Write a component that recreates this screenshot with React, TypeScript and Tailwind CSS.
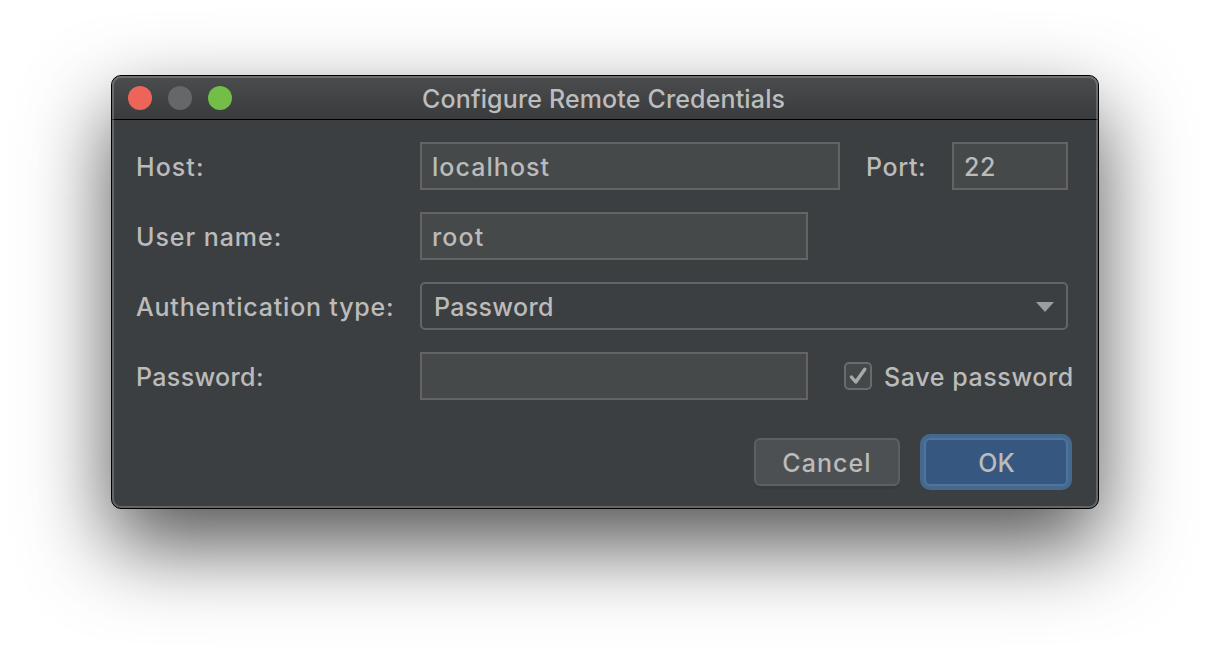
import type { ReactNode } from "react";

function Field({ className, children }: { className: string; children?: ReactNode }) {
  return (
    <div className={`flex h-12 items-center border-2 border-[#646464] bg-[#45494a] pl-2.5 pt-0.5 ${className}`}>
      {children}
    </div>
  );
}

function TitleBar() {
  return (
    <header className="flex h-11 items-center border-b border-black bg-linear-to-b from-[#4b4c4d] to-[#3a3b3c] pl-4">
      <div className="flex w-[104px] gap-4">
        <span className="size-6 rounded-full bg-[#ed6559]" />
        <span className="size-6 rounded-full bg-[#666769]" />
        <span className="size-6 rounded-full bg-[#72be47]" />
      </div>
      <h1 className="ml-[190px] whitespace-nowrap pt-0.5 text-[25px] font-[450] tracking-[0.15px] text-[#bcbdbe]">
        Configure Remote Credentials
      </h1>
    </header>
  );
}

export default function App() {
  return (
    <main className="flex h-[656px] w-[1210px] overflow-hidden bg-white pl-[111px] pt-[75px] font-['Inter',sans-serif]">
      <section className="relative h-[434px] w-[988px] overflow-visible rounded-[10px] border border-black bg-[#3c3f41] text-[25px] font-[450] leading-[30px] text-[#bbbbbb] shadow-[0_36px_84px_rgba(0,0,0,0.68)]">
        <div className="h-full overflow-hidden rounded-[9px]">
          <TitleBar />
          <div className="flex flex-col gap-[22px] pl-6 pt-[22px]">
            <div className="flex h-12 items-center">
              <span className="w-[284px] pt-0.5 tracking-[1.05px]">Host:</span>
              <Field className="w-[420px]"><span className="tracking-[1.05px]">localhost</span></Field>
              <span className="w-[112px] pl-[26px] pt-0.5 tracking-[0.6px]">Port:</span>
              <Field className="w-[116px]"><span className="tracking-[0.5px]">22</span></Field>
            </div>
            <div className="flex h-12 items-center">
              <span className="w-[284px] pt-0.5 tracking-[0.95px]">User name:</span>
              <Field className="w-[388px]"><span className="tracking-[1.1px]">root</span></Field>
            </div>
            <div className="flex h-12 items-center">
              <span className="w-[284px] whitespace-nowrap pt-0.5 tracking-[0.8px]">Authentication type:</span>
              <div className="flex h-12 w-[648px] items-center justify-between rounded-[5px] border-2 border-[#646464] pl-3 pr-3">
                <span className="pt-0.5 tracking-[0.32px]">Password</span>
                <svg className="mt-0.5" width="18" height="10" viewBox="0 0 18 10">
                  <path d="M0 0H18L9 10Z" fill="#9a9da1" />
                </svg>
              </div>
            </div>
            <div className="flex h-12 items-center">
              <span className="w-[284px] pt-0.5 tracking-[0.35px]">Password:</span>
              <Field className="w-[388px]" />
              <span className="ml-9 flex size-7 items-center justify-center rounded-[5px] border-2 border-[#6b6b6b] bg-[#43494a]">
                <svg className="shrink-0" width="24" height="24" viewBox="0 0 24 24" fill="none" stroke="#a9a9a9" strokeWidth="3.4" strokeLinecap="round" strokeLinejoin="round">
                  <path d="M5.4 13L9.8 18L18.8 5.2" />
                </svg>
              </span>
              <span className="ml-3 whitespace-nowrap pt-0.5 tracking-[0.6px]">Save password</span>
            </div>
          </div>
          <div className="flex justify-end gap-6 pr-[30px] pt-[38px]">
            <div className="flex h-12 w-[146px] items-center justify-center rounded-md border-2 border-[#5e6060] bg-[#4c5052] shadow-[0_3px_0_#383b3d]">
              <span className="pt-0.5 tracking-[1.05px]">Cancel</span>
            </div>
            <div className="flex h-12 w-[144px] items-center justify-center rounded-md border-2 border-[#4f759c] bg-[#365880] shadow-[0_0_0_4px_#43698e]">
              <span className="pl-px pt-0.5">OK</span>
            </div>
          </div>
        </div>
        <div className="pointer-events-none absolute inset-0 rounded-[9px] border-2 border-white/20" />
      </section>
    </main>
  );
}
